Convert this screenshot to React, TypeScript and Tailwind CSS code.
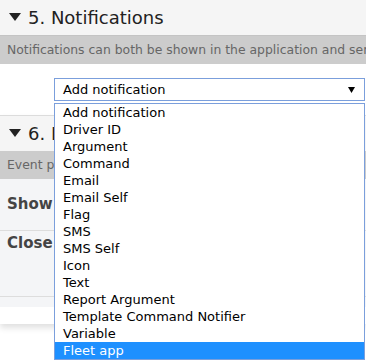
import React from 'react'

const options = [
  'Add notification',
  'Driver ID',
  'Argument',
  'Command',
  'Email',
  'Email Self',
  'Flag',
  'SMS',
  'SMS Self',
  'Icon',
  'Text',
  'Report Argument',
  'Template Command Notifier',
  'Variable',
  'Fleet app',
]

function Caret() {
  return (
    <svg width="12" height="9" viewBox="0 0 12 9" className="shrink-0">
      <polygon points="0,0 12,0 6,8" fill="#222" />
    </svg>
  )
}

function SectionHeader({ title }: { title: string }) {
  return (
    <div className="h-[35px] bg-[#f5f5f5] flex items-center pl-[9px] gap-[7px] whitespace-nowrap">
      <Caret />
      <span className="text-[18px] text-[#222] leading-none">{title}</span>
    </div>
  )
}

export default function App() {
  return (
    <div className="relative w-[366px] h-[361px] overflow-hidden bg-white font-['DejaVu_Sans',Verdana,sans-serif]">
      {/* section 5 */}
      <SectionHeader title="5. Notifications" />
      <div className="h-[29px] bg-[#cccccc] border-t border-[#c4c4c4] flex items-center pl-[7px] text-[12.4px] text-[#666] whitespace-nowrap overflow-hidden">
        Notifications can both be shown in the application and sent by email or SMS
      </div>

      <div className="pt-[14px] pl-[54px]">
        <div className="h-[23px] w-[311px] border border-[#7b9fdc] flex items-center justify-between pl-[8px] pr-[9px] text-[13px] text-black">
          <span>Add notification</span>
          <svg width="7" height="6" viewBox="0 0 7 6">
            <polygon points="0,0 7,0 3.5,6" fill="#000" />
          </svg>
        </div>
      </div>

      {/* section 6 */}
      <div className="mt-[14px] border-t border-[#dcdcdc] shadow-[0_4px_6px_rgba(0,0,0,0.12)]">
        <SectionHeader title="6. Interaction" />
        <div className="h-[28px] bg-[#cccccc] flex items-center pl-[7px] text-[12.4px] text-[#666] whitespace-nowrap overflow-hidden">
          Event processing settings
        </div>
        <div className="bg-[#f4f5f7]">
          <div className="h-[52px] pt-[13px] pl-[7px] border-b border-[#dddddd]">
            <span className="text-[15px] leading-[18px] font-bold text-[#444]">Show</span>
          </div>
          <div className="h-[66px] pl-[7px] border-b border-[#dddddd]">
            <span className="text-[15px] leading-[18px] font-bold text-[#444]">Close</span>
          </div>
          <div className="h-[10px]" />
        </div>
        <div className="h-[17px] bg-white" />
      </div>

      {/* open dropdown list */}
      <div className="absolute left-[54px] top-[103px] w-[311px] border border-[#7b9fdc] bg-white">
        {options.map(option => (
          <div
            key={option}
            className={
              option === 'Fleet app'
                ? 'h-[17px] leading-[17px] pl-[8px] text-[13px] bg-[#1e90ff] text-white whitespace-nowrap'
                : 'h-[17px] leading-[17px] pl-[8px] text-[13px] text-black whitespace-nowrap'
            }
          >
            {option}
          </div>
        ))}
      </div>
    </div>
  )
}
